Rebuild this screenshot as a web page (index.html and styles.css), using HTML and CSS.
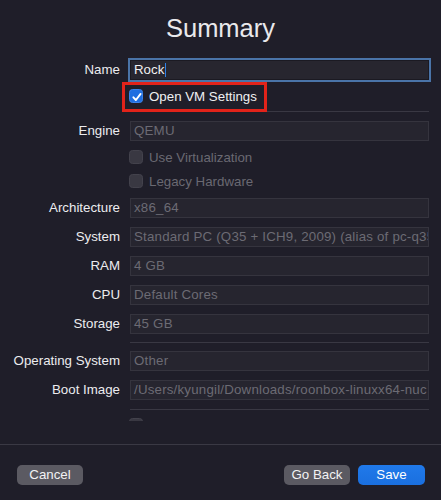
FILE: index.html
```html
<!DOCTYPE html>
<html>
<head>
<meta charset="utf-8">
<link rel="stylesheet" href="styles.css">
</head>
<body>
<div class="main">
  <div class="scroll">
    <h1 class="title">Summary</h1>

    <div class="row r-name">
      <div class="lbl">Name</div>
      <div class="field focus">Rock<span class="caret"></span></div>
    </div>

    <div class="row r-check">
      <div class="lbl"></div>
      <div class="check on">
        <span class="box"><svg viewBox="0 0 14 14" width="14" height="14"><path d="M3.4 7.3 L5.9 10 L10.6 3.9" fill="none" stroke="#fff" stroke-width="1.9" stroke-linecap="round" stroke-linejoin="round"/></svg></span>
        <span class="ctext">Open VM Settings</span>
        <span class="annot"></span>
      </div>
    </div>

    <div class="sep s1"></div>

    <div class="row r-engine">
      <div class="lbl">Engine</div>
      <div class="field">QEMU</div>
    </div>

    <div class="row r-cb1">
      <div class="lbl"></div>
      <div class="check off"><span class="box"></span><span class="ctext">Use Virtualization</span></div>
    </div>

    <div class="row r-cb2">
      <div class="lbl"></div>
      <div class="check off"><span class="box"></span><span class="ctext">Legacy Hardware</span></div>
    </div>

    <div class="row r-arch">
      <div class="lbl">Architecture</div>
      <div class="field">x86_64</div>
    </div>

    <div class="row r-f">
      <div class="lbl">System</div>
      <div class="field">Standard PC (Q35 + ICH9, 2009) (alias of pc-q35</div>
    </div>

    <div class="row r-f">
      <div class="lbl">RAM</div>
      <div class="field">4 GB</div>
    </div>

    <div class="row r-f">
      <div class="lbl">CPU</div>
      <div class="field">Default Cores</div>
    </div>

    <div class="row r-f">
      <div class="lbl">Storage</div>
      <div class="field">45 GB</div>
    </div>

    <div class="sep s2"></div>

    <div class="row r-os">
      <div class="lbl">Operating System</div>
      <div class="field">Other</div>
    </div>

    <div class="row r-f">
      <div class="lbl">Boot Image</div>
      <div class="field">/Users/kyungil/Downloads/roonbox-linuxx64-nuc</div>
    </div>

    <div class="sep s3"></div>

    <div class="row r-last">
      <div class="lbl"></div>
      <div class="check off"><span class="box"></span></div>
    </div>
  </div>
</div>

<div class="footer">
  <button class="btn">Cancel</button>
  <div class="spacer"></div>
  <button class="btn">Go Back</button>
  <button class="btn primary">Save</button>
</div>
</body>
</html>
```

FILE: styles.css
```css
html, body {
  margin: 0;
  padding: 0;
}

body {
  background: #1f1e29;
  color: #ececef;
  font-family: "Liberation Sans", Arial, sans-serif;
  font-size: 13.3px;
  width: 441px;
  height: 500px;
  overflow: hidden;
}

.main {
  height: 444px;
}

.scroll {
  height: 421px;
  overflow: hidden;
}

.title {
  margin: 0;
  padding-top: 13px;
  line-height: 30px;
  height: 30px;
  font-size: 25.5px;
  font-weight: 400;
  text-align: center;
  color: #e9e9ec;
}

.row {
  display: flex;
  align-items: center;
  gap: 10px;
}

.lbl {
  width: 120px;
  flex: none;
  text-align: right;
  white-space: nowrap;
  color: #ececef;
  line-height: 20px;
}

.field {
  width: 299px;
  height: 20px;
  box-sizing: border-box;
  flex: none;
  background: #26252f;
  border: 1px solid #35343e;
  color: #6c6b74;
  line-height: 18px;
  padding-left: 3px;
  letter-spacing: 0.2px;
  white-space: nowrap;
  overflow: hidden;
}

.field.focus {
  color: #f0f0f2;
  border-color: #1b1a22;
  box-shadow: 0 0 0 2px #4a74a8;
  background: #27262f;
  letter-spacing: 0;
}

.caret {
  display: inline-block;
  width: 1.5px;
  height: 14px;
  background: #2d80e6;
  vertical-align: -3px;
  margin-left: 0.5px;
}

.r-name { margin-top: 17px; }
.r-check { margin-top: 9px; height: 14px; }
.r-engine { margin-top: 9px; }
.r-cb1 { margin-top: 9px; height: 14px; }
.r-cb2 { margin-top: 10px; height: 14px; }
.r-arch { margin-top: 10px; }
.r-f { margin-top: 9px; }
.r-os { margin-top: 8px; }
.r-last { margin-top: 8px; height: 14px; }

.sep {
  margin-left: 130px;
  width: 299px;
  height: 1px;
  background: #393843;
}

.s1 { margin-top: 8px; }
.s2 { margin-top: 8px; }
.s3 { margin-top: 9px; }

.check {
  position: relative;
  display: flex;
  align-items: center;
  gap: 6px;
  height: 14px;
  margin-left: -1px;
}

.check .box {
  width: 14px;
  height: 14px;
  box-sizing: border-box;
  border-radius: 3.5px;
  flex: none;
  display: block;
}

.check.on .box {
  background: #1f6ee0;
  border: 0.5px solid #3b82ea;
}

.check.on .box svg {
  display: block;
}

.check.off .box {
  background: #393842;
  border: 0.5px solid #43424c;
}

.check.on .ctext {
  color: #f0f0f2;
}

.check.off .ctext {
  color: #6a6972;
}

.annot {
  position: absolute;
  left: -7px;
  top: -7px;
  width: 145px;
  height: 30px;
  box-sizing: border-box;
  border: 3px solid #e2231a;
  pointer-events: none;
}

.footer {
  border-top: 1px solid #3a3944;
  height: 55px;
  box-sizing: border-box;
  display: flex;
  align-items: flex-start;
  padding: 20px 16px 0 17px;
  gap: 8px;
}

.spacer {
  flex: 1;
}

.btn {
  font-family: "Liberation Sans", Arial, sans-serif;
  font-size: 13.3px;
  color: #f2f2f4;
  background: #5b5a62;
  border: none;
  border-radius: 5px;
  height: 20px;
  width: 66px;
  padding: 0;
  line-height: 20px;
  text-align: center;
}

.btn.primary {
  width: 67px;
  background: linear-gradient(#2079ea, #1a6fdf);
  color: #ffffff;
}
```
